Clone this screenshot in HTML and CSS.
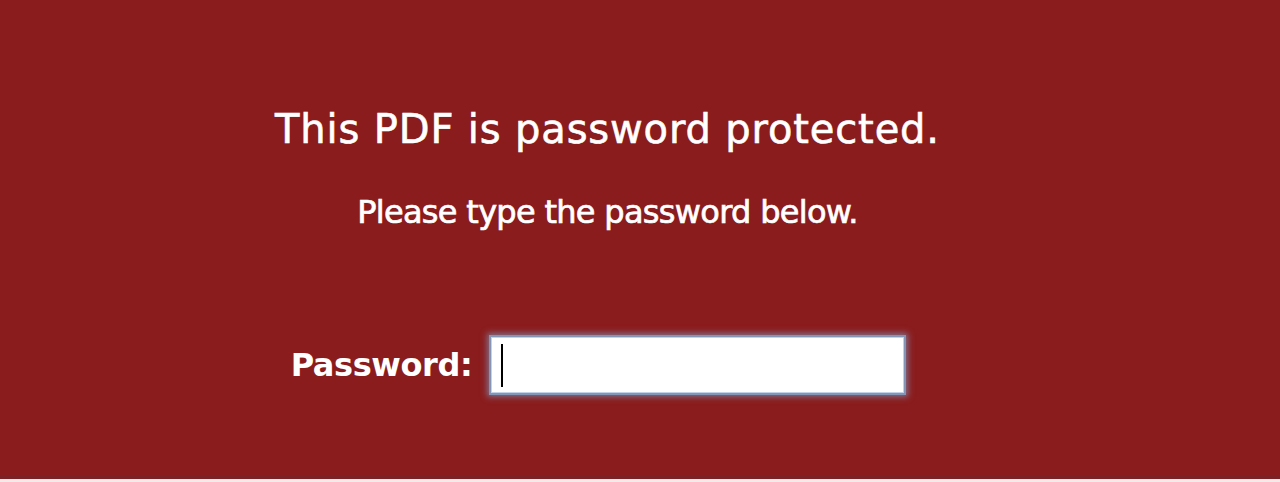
FILE: index.html
```html
<!DOCTYPE html>
<html>
<head>
<meta charset="utf-8">
<link rel="stylesheet" href="styles.css">
</head>
<body>
<main class="panel">
  <div class="content">
    <h1 class="title">This PDF is password protected.</h1>
    <p class="subtitle">Please type the password below.</p>
    <div class="row">
      <label class="label" for="pw">Password:</label>
      <div class="field"><span class="caret"></span></div>
    </div>
  </div>
</main>
<div class="footer"></div>
</body>
</html>
```
FILE: styles.css
```css
html, body {
  margin: 0;
  padding: 0;
  height: 482px;
  overflow: hidden;
  background: #f6e9e9;
}
.panel {
  height: 476px;
  background: #8b1c1d;
  border-bottom: 3px solid #7a2226;
  box-sizing: content-box;
  font-family: "DejaVu Sans", sans-serif;
  color: #fff;
}
.content {
  width: 1215px;
  display: flex;
  flex-direction: column;
  align-items: center;
  padding-top: 103px;
}
.title {
  margin: 0;
  font-size: 40px;
  font-weight: normal;
  line-height: 52px;
  letter-spacing: 0.85px;
  -webkit-text-stroke: 0.6px #fff;
}
.subtitle {
  margin: 37px 0 0 0;
  font-size: 32px;
  line-height: 40px;
  letter-spacing: -0.7px;
  -webkit-text-stroke: 0.7px #fff;
}
.row {
  display: flex;
  align-items: center;
  margin-top: 106px;
  margin-right: 21px;
  gap: 20px;
}
.label {
  font-size: 32px;
  font-weight: bold;
  letter-spacing: -0.4px;
}
.field {
  width: 411px;
  height: 54px;
  background: #fff;
  box-shadow: 0 0 0 1px #c3d2e6, 0 0 0 3px #8396b6, 0 0 6px 5px rgba(125, 147, 179, 0.7);
  display: flex;
  align-items: center;
  padding-left: 9px;
  box-sizing: border-box;
}
.caret {
  width: 2px;
  height: 43px;
  background: #000;
}
.footer {
  height: 3px;
}
```
